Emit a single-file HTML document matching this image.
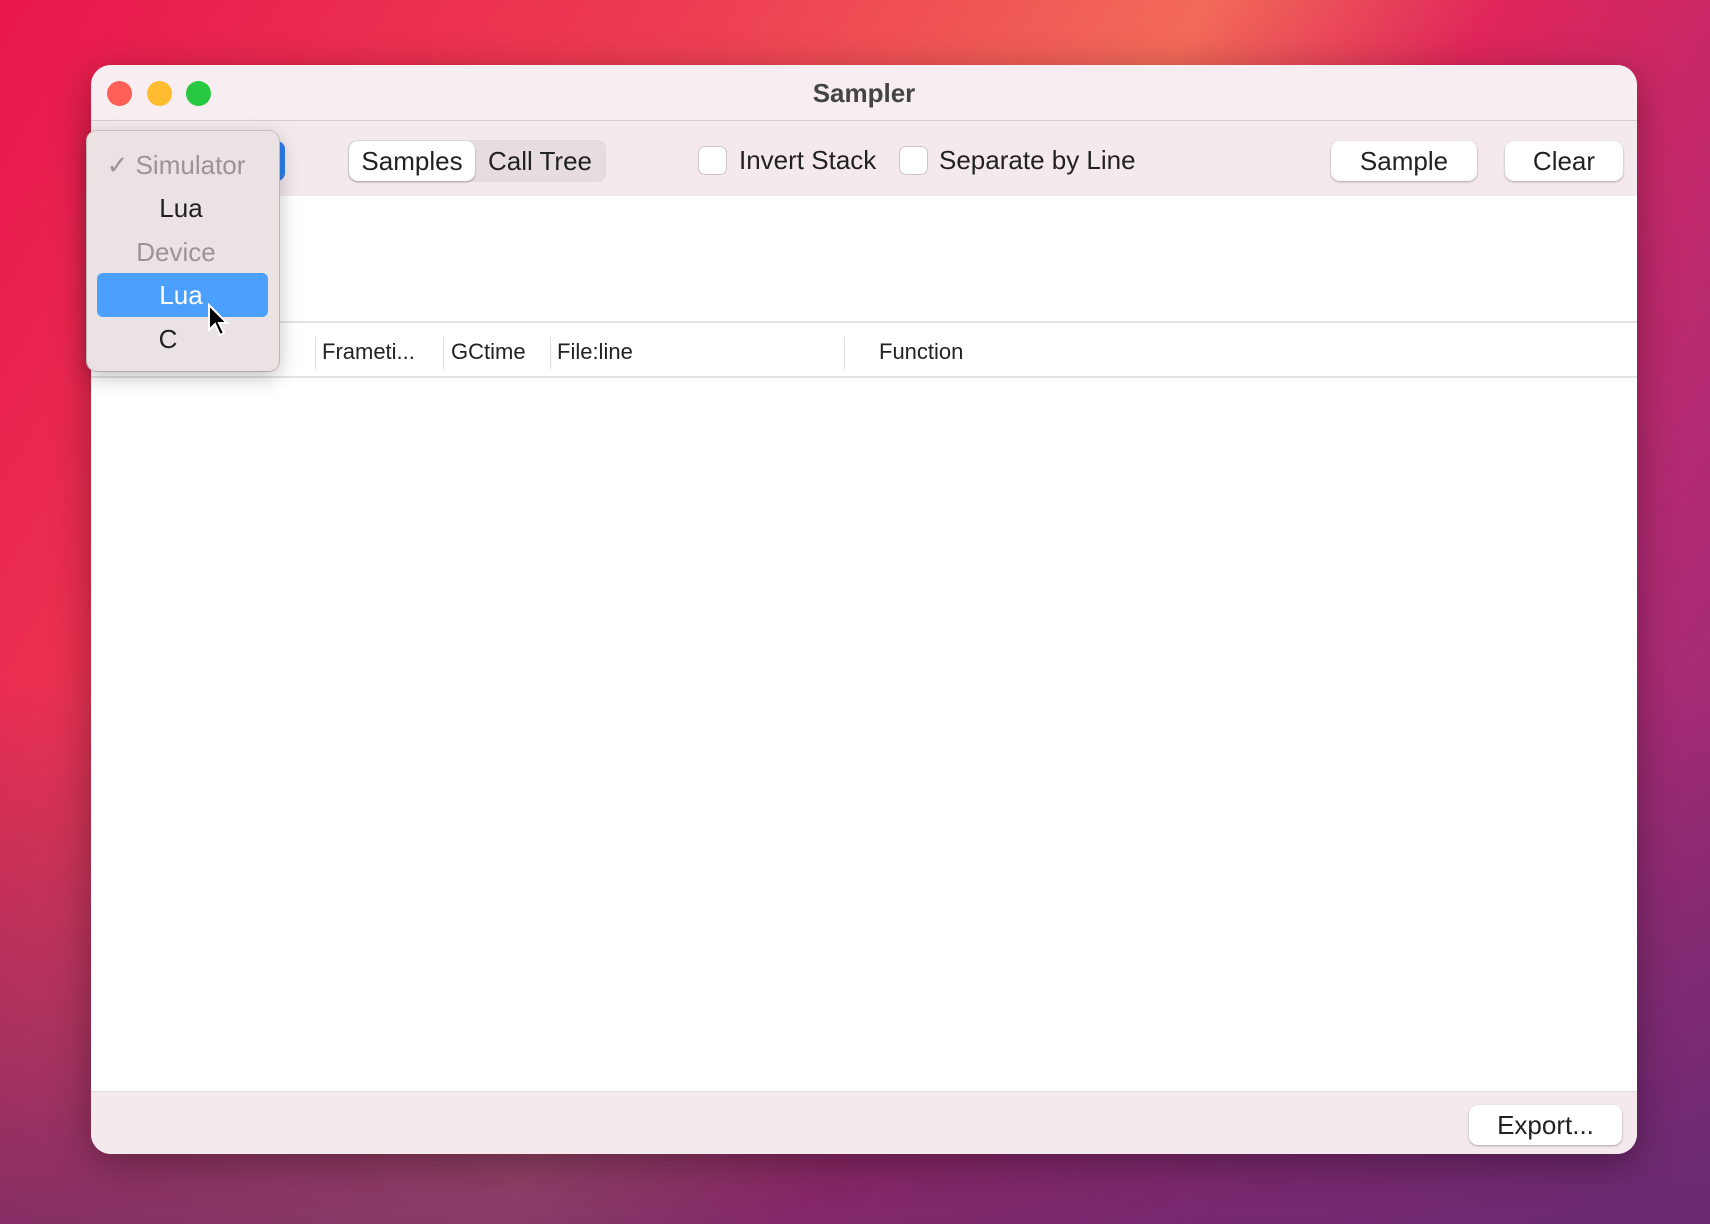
<!DOCTYPE html>
<html><head><style>
*{margin:0;padding:0;box-sizing:border-box}
body{width:1710px;height:1224px;overflow:hidden;position:relative;font-family:"Liberation Sans",sans-serif;
background:linear-gradient(180deg,rgba(0,0,0,0) 55%,rgba(90,40,110,.7) 100%),linear-gradient(120deg,#e8174d 0%,#ee3f52 30%,#f26a58 50%,#e0265a 62%,#b42a72 80%,#8a2c78 100%);}
.win{position:absolute;left:91px;top:65px;width:1546px;height:1089px;border-radius:20px;overflow:hidden;background:#fff;box-shadow:0 10px 40px rgba(0,0,0,.35)}
.title{position:absolute;left:0;top:0;width:100%;height:56px;background:#f8edf0;border-bottom:1px solid #d8cccf}
.title .t{position:absolute;width:100%;text-align:center;top:13px;font-weight:bold;font-size:26px;color:#444}
.dot{position:absolute;top:16px;width:25px;height:25px;border-radius:50%}
.tb{position:absolute;left:0;top:56px;width:100%;height:75px;background:#f4e9ec}
.btn{position:absolute;background:#fff;border-radius:9px;box-shadow:0 1px 2px rgba(0,0,0,.3);font-size:26px;color:#222;text-align:center;line-height:40px}
.seg{position:absolute;left:257px;top:19px;width:258px;height:42px;background:#e7dde0;border-radius:9px;box-shadow:inset 0 0 0 1px #ddd}
.cb{position:absolute;top:26px;width:27px;height:27px;background:#fff;border-radius:6px;box-shadow:0 0 0 1px #cfc5c8}
.lbl{position:absolute;top:24px;font-size:26px;color:#222}
.line{position:absolute;left:0;width:100%;height:2px;background:#e3e3e3}
.h{position:absolute;top:274px;font-size:22px;color:#222}
.sep{position:absolute;top:272px;width:1px;height:32px;background:#ddd}
.foot{position:absolute;left:0;top:1026px;width:100%;height:63px;background:#f4e9ec;border-top:1px solid #ddd}
.menu{position:absolute;left:87px;top:131px;width:192px;height:240px;background:#ebe2e4;border-radius:10px;box-shadow:0 6px 20px rgba(0,0,0,.25),0 0 0 1px #d5cbce}
.mi{position:absolute;font-size:26px;color:#222;transform:translateX(-50%);white-space:nowrap}
</style></head><body>
<div class="win">
 <div class="title"><div class="t">Sampler</div>
  <div class="dot" style="left:16px;background:#fe5f57"></div>
  <div class="dot" style="left:56px;background:#febc2e"></div>
  <div class="dot" style="left:95px;background:#28c840"></div></div>
 <div class="tb">
  <div style="position:absolute;left:150px;top:20px;width:44px;height:40px;background:#2d7ff0;border-radius:8px"></div>
  <div class="seg"><div class="btn" style="left:1px;top:1px;width:126px;">Samples</div>
   <div style="position:absolute;left:127px;top:1px;width:130px;text-align:center;line-height:40px;font-size:26px;color:#222">Call Tree</div></div>
  <div class="cb" style="left:608px"></div><div class="lbl" style="left:648px">Invert Stack</div>
  <div class="cb" style="left:809px"></div><div class="lbl" style="left:848px">Separate by Line</div>
  <div class="btn" style="left:1240px;top:20px;width:146px">Sample</div>
  <div class="btn" style="left:1414px;top:20px;width:118px">Clear</div>
 </div>
 <div class="line" style="top:256px"></div>
 <div class="line" style="top:311px"></div>
 <div class="sep" style="left:224px"></div><div class="h" style="left:231px">Frameti...</div>
 <div class="sep" style="left:352px"></div><div class="h" style="left:360px">GCtime</div>
 <div class="sep" style="left:459px"></div><div class="h" style="left:466px">File:line</div>
 <div class="sep" style="left:753px"></div><div class="h" style="left:788px">Function</div>
 <div class="foot"><div class="btn" style="left:1378px;top:13px;width:153px">Export...</div></div>
</div>
<div class="menu">
 <div class="mi" style="top:19px;left:89px;color:#9a9495">✓ Simulator</div>
 <div class="mi" style="top:62px;left:94px">Lua</div>
 <div class="mi" style="top:106px;left:89px;color:#9a9495">Device</div>
 <div style="position:absolute;left:10px;top:142px;width:171px;height:44px;background:#4aa0fc;border-radius:6px"></div>
 <div class="mi" style="top:149px;left:94px;color:#fff">Lua</div>
 <div class="mi" style="top:193px;left:81px">C</div>
</div>
<svg style="position:absolute;left:207px;top:303px" width="26" height="36" viewBox="0 0 26 36"><path d="M2 2 L2 27 L8 21 L13 32 L17 30 L12 20 L20 20 Z" fill="#000" stroke="#fff" stroke-width="2"/></svg>
</body></html>
